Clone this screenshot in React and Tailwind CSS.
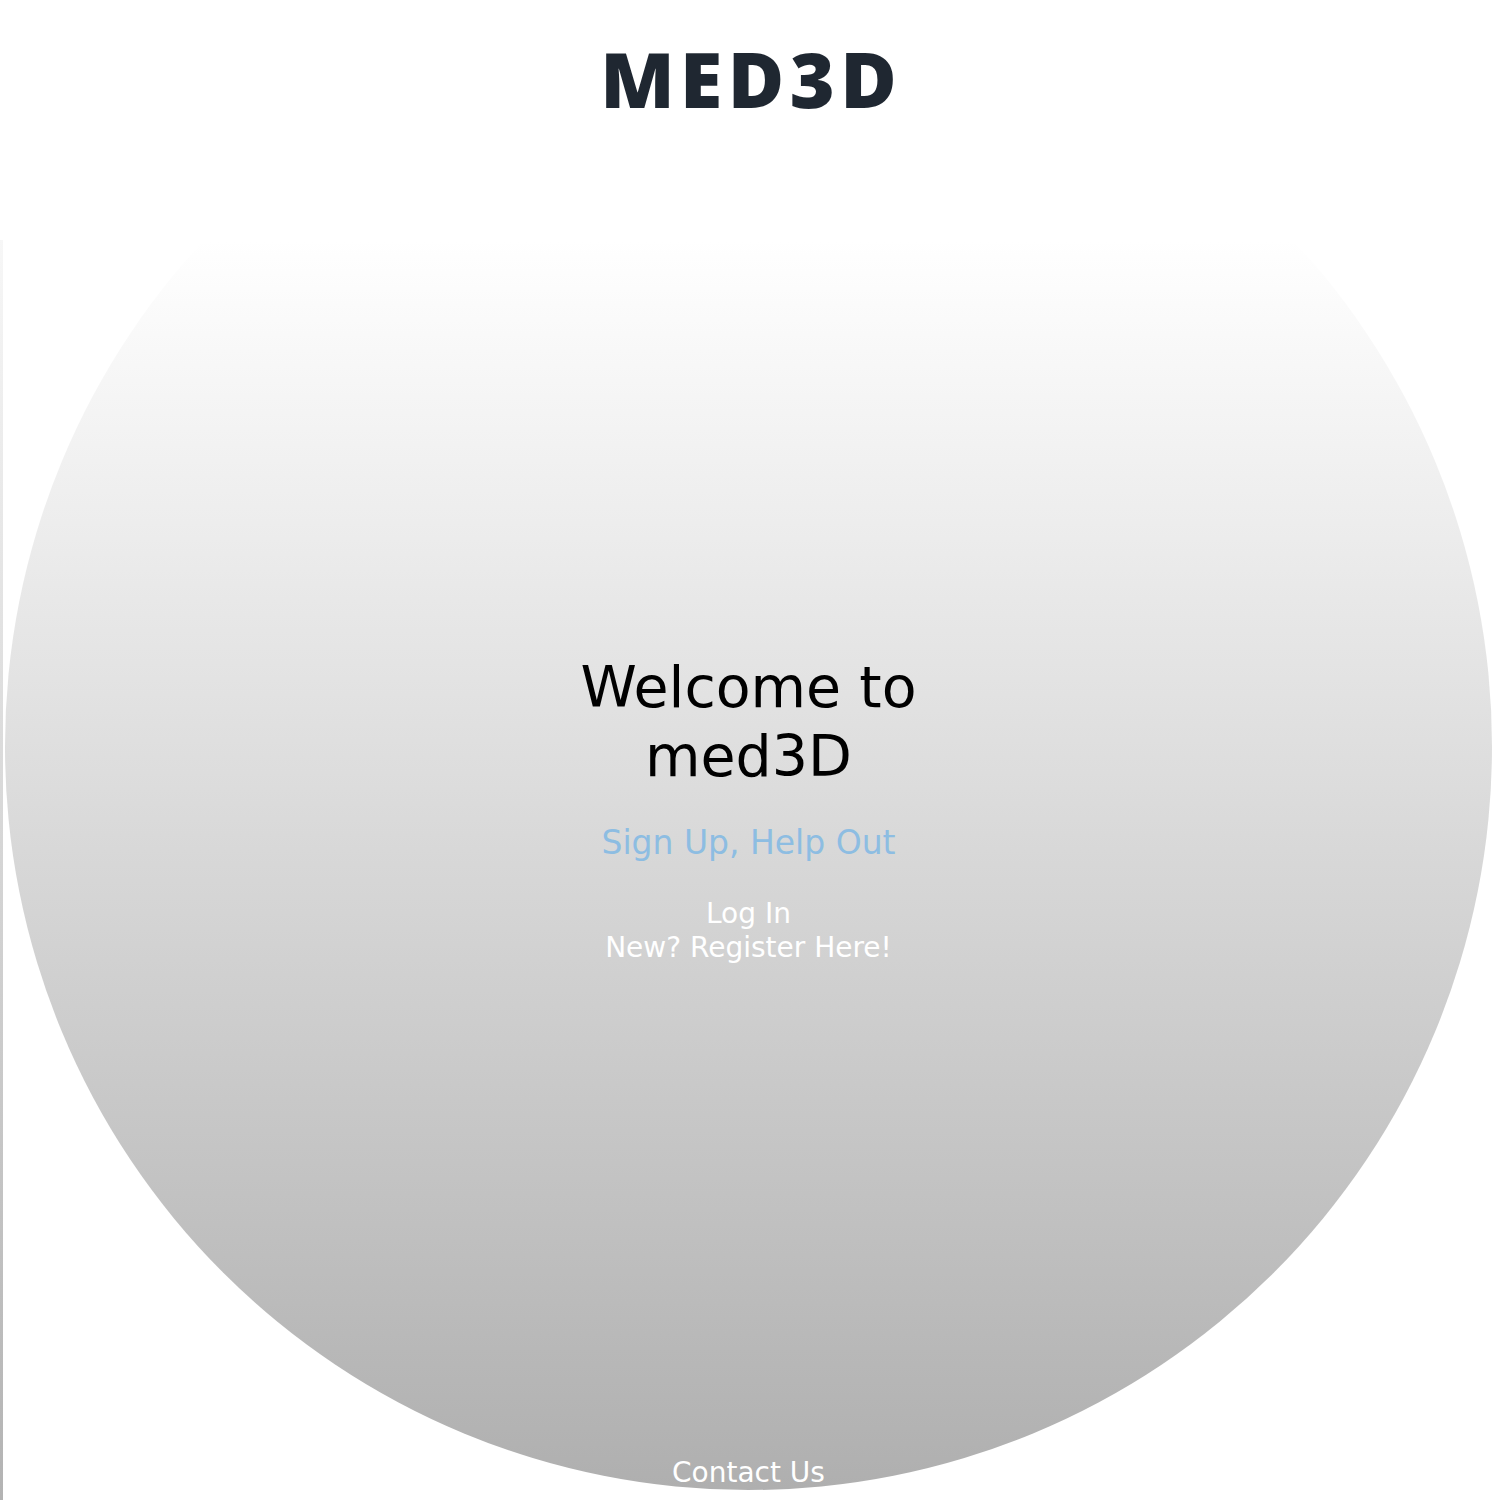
export default function App() {
  return (
    <div className="relative w-full h-[1500px] bg-white overflow-hidden flex">
      <div className="w-[3px] shrink-0 flex flex-col">
        <div className="h-[240px] bg-white" />
        <div className="flex-1 bg-gradient-to-b from-[#f7f7f7] to-[#b3b3b3]" />
      </div>
      <div className="flex-1 pt-[3px] flex justify-center">
        <div
          className="w-[1487px] h-[1487px] shrink-0 rounded-full bg-[linear-gradient(to_bottom,#ffffff_16%,#afafaf_100%)] flex flex-col items-center ml-[-6px]"
          style={{ fontFamily: "'DejaVu Sans', 'Noto Sans', sans-serif" }}
        >
          <h1
            className="mt-[37px] text-[77px] leading-none font-black tracking-[0.07em] text-[#1f2731] pl-[0.07em]"
            style={{ fontFamily: "'Noto Sans', Lato, sans-serif" }}
          >
            MED3D
          </h1>
          <div className="mt-[536px] flex flex-col items-center text-center">
            <h2 className="text-[57px] leading-[69px] font-normal text-black">
              Welcome to
              <br />
              med3D
            </h2>
            <p className="mt-[32px] text-[33px] leading-[40px] text-[#8dbde2]">
              Sign Up, Help Out
            </p>
            <div className="mt-[34px] flex flex-col items-center text-[28px] leading-[34px] text-white">
              <a>Log In</a>
              <a>New? Register Here!</a>
            </div>
          </div>
          <div className="mt-auto mb-0 text-[28px] leading-[34px] text-white">
            Contact Us
          </div>
        </div>
      </div>
    </div>
  );
}
